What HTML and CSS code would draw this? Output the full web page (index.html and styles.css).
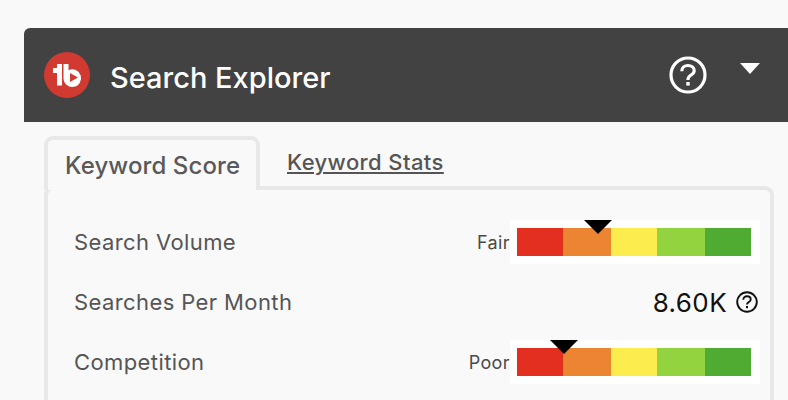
FILE: index.html
```html
<!DOCTYPE html>
<html lang="en">
<head>
<meta charset="utf-8">
<title>Search Explorer</title>
<link rel="stylesheet" href="styles.css">
</head>
<body>
<main class="explorer">
  <header class="head">
    <svg class="logo" viewBox="0 0 46 46" aria-hidden="true">
      <circle cx="23" cy="23" r="23" fill="#d03a31"/>
      <path fill="#fff" d="M9 16h4v-4h5v21.500h-5V21H9z"/>
      <path fill="#fff" d="M19.500 12H24.500V18.200A8.800 8.800 0 1 1 19.500 26Z"/>
      <path fill="#d03a31" d="M26 21l8 4.500-8 4.500z"/>
    </svg>
    <h1 class="title">Search Explorer</h1>
    <svg class="help" viewBox="0 0 38 38" aria-hidden="true">
      <circle cx="19" cy="19" r="17" fill="none" stroke="#fff" stroke-width="3.200"/>
      <path fill="none" stroke="#fff" stroke-width="3.200" d="M12.800 15.200c0-3.500 2.800-5.700 6.200-5.700 3.500 0 6.200 2.200 6.200 5.200 0 4.300-6.200 4.300-6.200 8.600v.7"/>
      <rect x="17.300" y="26" width="3.400" height="3.600" fill="#fff"/>
    </svg>
    <span class="caret"></span>
  </header>
  <nav class="tabs">
    <span class="tab">Keyword Score</span>
    <a class="link" href="#">Keyword Stats</a>
  </nav>
  <section class="panel">
    <div class="row">
      <span class="label">Search Volume</span>
      <div class="score">
        <span class="rating">Fair</span>
        <div class="gauge">
          <span class="seg red"></span><span class="seg orange"></span><span class="seg yellow"></span><span class="seg lime"></span><span class="seg green"></span>
          <span class="pointer fair"></span>
        </div>
      </div>
    </div>
    <div class="row">
      <span class="label">Searches Per Month</span>
      <div class="value">
        <span class="number">8.60K</span>
        <svg class="info" viewBox="0 0 22 22" aria-hidden="true">
          <circle cx="11" cy="11" r="9.800" fill="none" stroke="#111" stroke-width="1.900"/>
          <path fill="none" stroke="#111" stroke-width="1.900" d="M7.300 8.800c0-2.200 1.600-3.600 3.700-3.600s3.700 1.300 3.700 3.200c0 2.700-3.700 2.600-3.700 5.200"/>
          <rect x="10" y="15" width="2" height="2.200" fill="#111"/>
        </svg>
      </div>
    </div>
    <div class="row">
      <span class="label">Competition</span>
      <div class="score">
        <span class="rating">Poor</span>
        <div class="gauge">
          <span class="seg red"></span><span class="seg orange"></span><span class="seg yellow"></span><span class="seg lime"></span><span class="seg green"></span>
          <span class="pointer poor"></span>
        </div>
      </div>
    </div>
  </section>
</main>
</body>
</html>
```
FILE: styles.css
```css
html, body {
  margin: 0;
  height: 400px;
  overflow: hidden;
  background: #f9f9f9;
}
body {
  font-family: "Inter", "Liberation Sans", sans-serif;
  color: #555;
}
.explorer {
  padding: 28px 0 0 24px;
}
.head {
  display: flex;
  align-items: center;
  height: 94px;
  padding: 0 28px 0 20px;
  background: #424242;
  border-radius: 6px 0 0 0;
}
.logo {
  width: 46px;
  height: 46px;
  flex: none;
}
.title {
  flex: 1;
  margin: 4px 0 0 20px;
  font-size: 29px;
  font-weight: 500;
  color: #fff;
}
.help {
  width: 38px;
  height: 38px;
  margin-right: 33px;
}
.caret {
  margin-bottom: 13px;
  border-left: 10px solid transparent;
  border-right: 10px solid transparent;
  border-top: 11px solid #fff;
}
.tabs {
  display: flex;
  align-items: flex-start;
  margin: 14px 0 -4px 20px;
}
.tab {
  position: relative;
  box-sizing: border-box;
  width: 216px;
  height: 54px;
  padding: 10px 0 0 17px;
  border: 4px solid #e8e8e8;
  border-bottom: 0;
  border-radius: 9px 9px 0 0;
  background: #f9f9f9;
  font-size: 24px;
  font-weight: 500;
  line-height: 32px;
  letter-spacing: .1px;
  color: #595959;
}
.link {
  margin: 10px 0 0 27px;
  font-size: 22px;
  font-weight: 500;
  line-height: 32px;
  letter-spacing: .4px;
  color: #555;
}
.panel {
  box-sizing: border-box;
  height: 214px;
  margin: 0 14px 0 20px;
  padding: 30px 10px 0 26px;
  border: 4px solid #e8e8e8;
  border-radius: 9px 9px 0 0;
  border-bottom: 0;
}
.row {
  display: flex;
  align-items: center;
  justify-content: space-between;
  height: 44px;
  margin-bottom: 16px;
}
.label {
  font-size: 22px;
  letter-spacing: .4px;
}
.score {
  display: flex;
  align-items: center;
}
.rating {
  font-size: 18px;
  letter-spacing: .4px;
  color: #4a4a4a;
}
.gauge {
  position: relative;
  display: flex;
  padding: 8px 9px 8px 7px;
  background: #fff;
}
.seg {
  height: 28px;
}
.red { width: 46px; background: #e22f20; }
.orange { width: 48px; background: #ec8531; }
.yellow { width: 46px; background: #fcec4e; }
.lime { width: 48px; background: #94d340; }
.green { width: 46px; background: #4fab31; }
.pointer {
  position: absolute;
  top: 0;
  border-left: 14px solid transparent;
  border-right: 14px solid transparent;
  border-top: 14px solid #000;
}
.fair { left: 74px; }
.poor { left: 40px; }
.value {
  display: flex;
  align-items: center;
  gap: 9px;
  padding-right: 2px;
}
.number {
  font-size: 26px;
  letter-spacing: .4px;
  color: #111;
}
.info {
  width: 22px;
  height: 22px;
}
```
